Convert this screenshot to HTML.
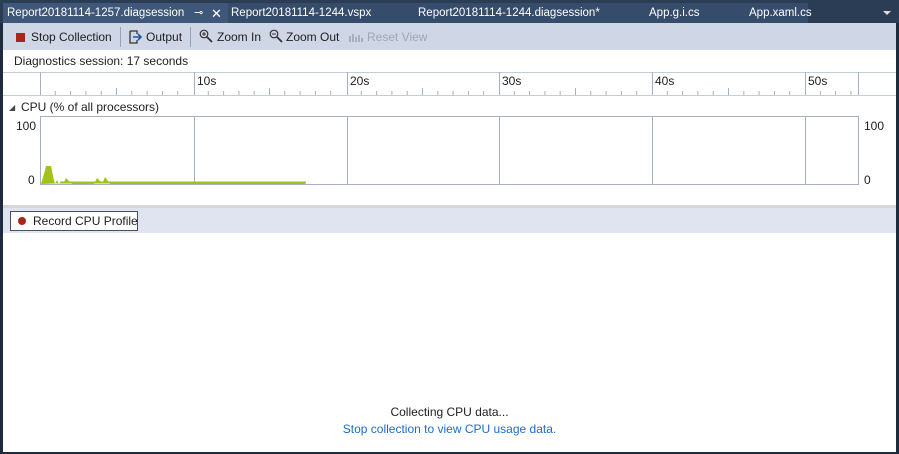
<!DOCTYPE html>
<html><head><style>
*{margin:0;padding:0;box-sizing:border-box}
body{width:899px;height:454px;overflow:hidden;background:#1e2b3d;font-family:"Segoe UI","Liberation Sans",sans-serif;font-size:12px;position:relative}
.abs{position:absolute}
.tabbar{left:0;top:0;width:899px;height:23px;background:#2b3c55}
.tab{top:4px;height:20px;color:#fff;font-size:11.5px;line-height:19px;white-space:nowrap}
.main{left:3px;top:23px;width:893px;height:429px;background:#fff}
.tb{left:0;top:0;width:893px;height:27px;background:#cfd6e5}
.tbt{top:7px;color:#1e1e1e;white-space:nowrap}
.sep{top:4px;width:1px;height:20px;background:#9aa3b5}
.vl{width:1px;background:#a5b0c2}
.rl{top:51px;font-size:12px;color:#1e1e1e}
</style></head><body>
<div class="abs tabbar"></div>
<div class="abs" style="left:3px;top:3px;width:225px;height:20px;background:#3f5779"></div>
<div class="abs tab" style="left:7px">Report20181114-1257.diagsession</div>
<div class="abs tab" style="left:194px;font-size:11px">⊸</div>
<div class="abs tab" style="left:211px;font-size:13px">✕</div>
<div class="abs" style="left:228px;top:3px;width:580px;height:20px;background:#364c6b"></div>
<div class="abs tab" style="left:231px">Report20181114-1244.vspx</div>
<div class="abs tab" style="left:418px">Report20181114-1244.diagsession*</div>
<div class="abs tab" style="left:649px">App.g.i.cs</div>
<div class="abs tab" style="left:749px">App.xaml.cs</div>
<div class="abs" style="left:883px;top:11px;border-left:4px solid transparent;border-right:4px solid transparent;border-top:4px solid #ddd"></div>

<div class="abs main">
 <div class="abs tb"></div>
 <div class="abs" style="left:13px;top:10px;width:9px;height:9px;background:#a4281b"></div>
 <div class="abs tbt" style="left:28px">Stop Collection</div>
 <div class="abs sep" style="left:117px"></div>
 <svg class="abs" style="left:124px;top:6px" width="16" height="16"><path d="M3 2h7v3M3 2v12h7v-3" fill="none" stroke="#333" stroke-width="1.3"/><path d="M6 8h8M11 5l3 3-3 3" fill="none" stroke="#1c5aa8" stroke-width="1.6"/></svg>
 <div class="abs tbt" style="left:143px">Output</div>
 <div class="abs sep" style="left:187px"></div>
 <svg class="abs" style="left:196px;top:6px" width="14" height="14"><circle cx="5" cy="5" r="3.8" fill="none" stroke="#333" stroke-width="1.2"/><path d="M8 8l5 5" stroke="#333" stroke-width="1.8"/><path d="M3 5h4M5 3v4" stroke="#333"/></svg>
 <div class="abs tbt" style="left:214px">Zoom In</div>
 <svg class="abs" style="left:266px;top:6px" width="14" height="14"><circle cx="5" cy="5" r="3.8" fill="none" stroke="#333" stroke-width="1.2"/><path d="M8 8l5 5" stroke="#333" stroke-width="1.8"/><path d="M3 5h4" stroke="#333"/></svg>
 <div class="abs tbt" style="left:283px">Zoom Out</div>
 <svg class="abs" style="left:346px;top:6px" width="14" height="14"><path d="M1 13V7M4 13V5M7 13V8M10 13V6M13 13V9" stroke="#a0a6b0" stroke-width="1.6"/></svg>
 <div class="abs tbt" style="left:364px;color:#a2a7b0">Reset View</div>

 <div class="abs" style="left:11px;top:31px;color:#1e1e1e;font-size:12px">Diagnostics session: 17 seconds</div>
 <div class="abs" style="left:0;top:49px;width:893px;height:1px;background:#c5ccd9"></div>
 <div class="abs" style="left:0;top:72px;width:893px;height:1px;background:#c5ccd9"></div>
 <div class="abs vl" style="left:37px;top:49px;height:23px"></div>
 <div class="abs vl" style="left:191px;top:49px;height:23px"></div>
 <div class="abs vl" style="left:344px;top:49px;height:23px"></div>
 <div class="abs vl" style="left:496px;top:49px;height:23px"></div>
 <div class="abs vl" style="left:649px;top:49px;height:23px"></div>
 <div class="abs vl" style="left:802px;top:49px;height:23px"></div>
 <div class="abs vl" style="left:855px;top:49px;height:23px"></div>
 <div class="abs rl" style="left:194px">10s</div>
 <div class="abs rl" style="left:347px">20s</div>
 <div class="abs rl" style="left:499px">30s</div>
 <div class="abs rl" style="left:652px">40s</div>
 <div class="abs rl" style="left:805px">50s</div>
 <svg class="abs" style="left:37px;top:62px" width="820" height="10">
  <g stroke="#a5b0c2">
  <path d="M15.3 6v4M30.6 6v4M45.9 6v4M61.2 6v4M76.5 3v7M91.8 6v4M107.1 6v4M122.4 6v4M137.7 6v4"/>
  <path d="M168.3 6v4M183.6 6v4M198.9 6v4M214.2 6v4M229.5 3v7M244.8 6v4M260.1 6v4M275.4 6v4M290.7 6v4"/>
  <path d="M321.3 6v4M336.6 6v4M351.9 6v4M367.2 6v4M382.5 3v7M397.8 6v4M413.1 6v4M428.4 6v4M443.7 6v4"/>
  <path d="M474.3 6v4M489.6 6v4M504.9 6v4M520.2 6v4M535.5 3v7M550.8 6v4M566.1 6v4M581.4 6v4M596.7 6v4"/>
  <path d="M627.3 6v4M642.6 6v4M657.9 6v4M673.2 6v4M688.5 3v7M703.8 6v4M719.1 6v4M734.4 6v4M749.7 6v4"/>
  <path d="M780.3 6v4M795.6 6v4M810.9 6v4"/>
  </g></svg>

 <div class="abs" style="left:6px;top:80px;font-size:8px;color:#444">◢</div>
 <div class="abs" style="left:18px;top:77px;color:#1e1e1e">CPU (% of all processors)</div>
 <div class="abs" style="left:13px;top:96px;color:#1e1e1e">100</div>
 <div class="abs" style="left:25px;top:150px;color:#1e1e1e">0</div>
 <div class="abs" style="left:861px;top:96px;color:#1e1e1e">100</div>
 <div class="abs" style="left:861px;top:150px;color:#1e1e1e">0</div>
 <svg class="abs" style="left:37px;top:93px" width="820" height="70">
  <rect x="0.5" y="0.5" width="818" height="68" fill="#fff" stroke="#a5b0c2"/>
  <path d="M154.5 1v68M307.5 1v68M459.5 1v68M612.5 1v68M765.5 1v68" stroke="#a5b0c2"/>
  <path d="M1 68L4 58L6 50L11 50L13 60L15 68L17 64L19 68L21 66L23 68L26 62L28 64L30 66L32 68L34 68L54 68L57 62L60 65L63 66L65 61L68 65L70 68L265 68L265 66L60 66Z" fill="#a3c218"/>
  <path d="M20 66.5H266" stroke="#a3c218" stroke-width="2"/>
 </svg>

 <div class="abs" style="left:0;top:182px;width:893px;height:3px;background:#d6d6d6"></div>
 <div class="abs" style="left:0;top:185px;width:893px;height:25px;background:#dfe4f0"></div>
 <div class="abs" style="left:7px;top:188px;width:128px;height:20px;background:#fff;border:1px solid #44506a"></div>
 <div class="abs" style="left:15px;top:194px;width:8px;height:8px;border-radius:50%;background:#a4281b"></div>
 <div class="abs" style="left:30px;top:191px;color:#1e1e1e">Record CPU Profile</div>

 <div class="abs" style="left:0;top:382px;width:893px;text-align:center;color:#1e1e1e">Collecting CPU data...</div>
 <div class="abs" style="left:0;top:399px;width:893px;text-align:center;color:#1e6bc7">Stop collection to view CPU usage data.</div>
</div>
</body></html>
